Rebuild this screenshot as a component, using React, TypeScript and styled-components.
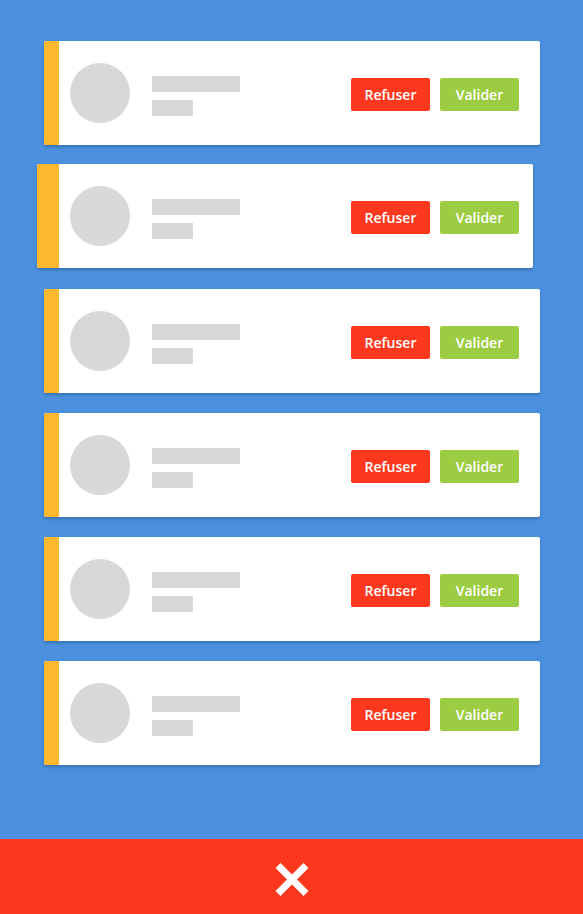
import React from "react";
import styled, { createGlobalStyle } from "styled-components";

const GlobalStyle = createGlobalStyle`
  html, body {
    margin: 0;
    padding: 0;
    height: 100%;
  }
  body {
    background: #4a90df;
    font-family: "Open Sans", "Liberation Sans", sans-serif;
  }
  #root {
    height: 100%;
  }
`;

const Screen = styled.div`
  height: 100vh;
  display: flex;
  flex-direction: column;
  background: #4a90df;
`;

const List = styled.div`
  display: flex;
  flex-direction: column;
  gap: 20px;
  padding: 41px 43px 0 44px;
`;

const Card = styled.div<{ $dragged?: boolean }>`
  display: flex;
  align-items: center;
  height: 104px;
  background: #fff;
  border-radius: 2px;
  overflow: hidden;
  box-shadow: 0 2px 3px rgba(0, 0, 0, 0.22);
  transform: ${(p) => (p.$dragged ? "translate(-7px, -1px)" : "none")};
`;

const Stripe = styled.div<{ $dragged?: boolean }>`
  align-self: stretch;
  width: ${(p) => (p.$dragged ? 22 : 15)}px;
  flex-shrink: 0;
  background: #feb82d;
`;

const Content = styled.div<{ $dragged?: boolean }>`
  flex: 1;
  display: flex;
  align-items: center;
  padding: 0 ${(p) => (p.$dragged ? 14 : 21)}px 0 11px;
`;

const Avatar = styled.div`
  width: 60px;
  height: 60px;
  border-radius: 50%;
  background: #d8d8d8;
  flex-shrink: 0;
`;

const Lines = styled.div`
  display: flex;
  flex-direction: column;
  gap: 8px;
  margin: 6px 0 0 22px;
`;

const Line = styled.div<{ $w: number }>`
  width: ${(p) => p.$w}px;
  height: 16px;
  background: #d8d8d8;
`;

const Actions = styled.div`
  margin: 3px 0 0 auto;
  display: flex;
  gap: 10px;
`;

const Button = styled.button<{ $tone: "red" | "green" }>`
  width: 79px;
  height: 33px;
  border: none;
  border-radius: 2px;
  padding: 0;
  background: ${(p) => (p.$tone === "red" ? "#fe381e" : "#9ccc41")};
  color: #fff;
  font-family: "Open Sans", "Liberation Sans", sans-serif;
  font-size: 14px;
  font-weight: 600;
  cursor: pointer;
`;

const BottomBar = styled.div`
  margin-top: auto;
  height: 75px;
  background: #fe381e;
  display: flex;
  align-items: center;
  justify-content: center;
  padding-top: 5px;
  box-sizing: border-box;
`;

const CloseIcon = () => (
  <svg width="34" height="33" viewBox="0 0 34 33">
    <path
      d="M3 2.5 L31 30.5 M31 2.5 L3 30.5"
      stroke="#fff"
      strokeWidth="7"
      strokeLinecap="butt"
    />
  </svg>
);

const requests = [
  { id: 1 },
  { id: 2, dragged: true },
  { id: 3 },
  { id: 4 },
  { id: 5 },
  { id: 6 },
];

const App: React.FC = () => {
  return (
    <Screen>
      <GlobalStyle />
      <List>
        {requests.map((r) => (
          <Card key={r.id} $dragged={r.dragged}>
            <Stripe $dragged={r.dragged} />
            <Content $dragged={r.dragged}>
              <Avatar />
              <Lines>
                <Line $w={88} />
                <Line $w={41} />
              </Lines>
              <Actions>
                <Button $tone="red">Refuser</Button>
                <Button $tone="green">Valider</Button>
              </Actions>
            </Content>
          </Card>
        ))}
      </List>
      <BottomBar>
        <CloseIcon />
      </BottomBar>
    </Screen>
  );
};

export default App;
